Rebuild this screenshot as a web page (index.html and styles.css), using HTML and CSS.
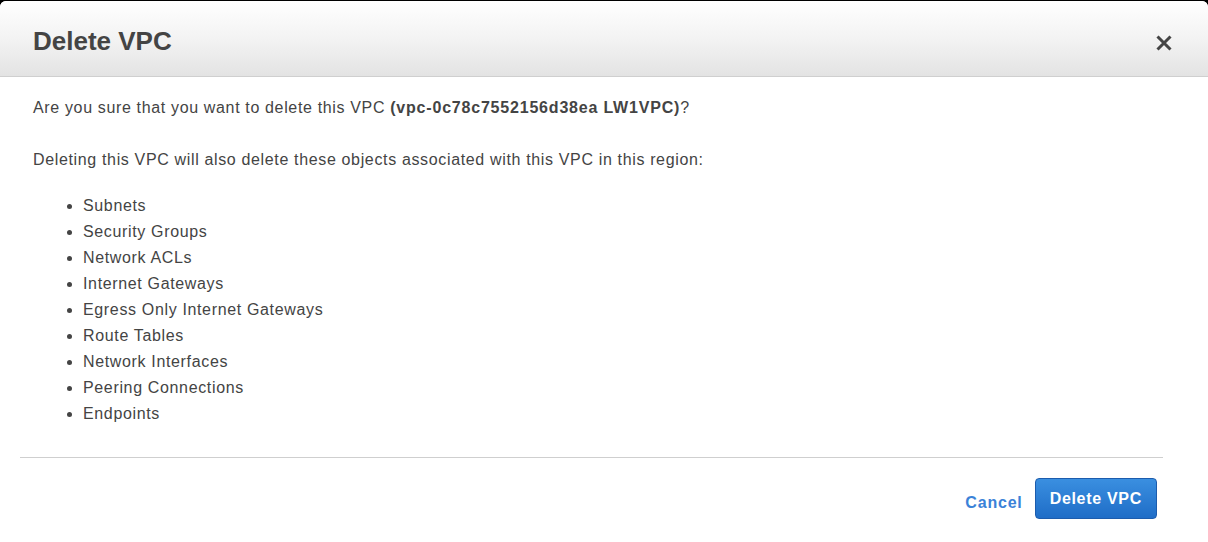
FILE: index.html
```html
<!DOCTYPE html>
<html>
<head>
<meta charset="utf-8">
<link rel="stylesheet" href="styles.css">
</head>
<body>
<div class="modal">
  <div class="modal-header">
    <h1 class="title">Delete VPC</h1>
    <button class="close" aria-label="Close">
      <svg width="18" height="18" viewBox="0 0 18 18"><path d="M2.5 2.5 L15.5 15.5 M15.5 2.5 L2.5 15.5" stroke="#444" stroke-width="3" stroke-linecap="butt"/></svg>
    </button>
  </div>
  <div class="modal-body">
    <p class="line">Are you sure that you want to delete this VPC <b>(vpc-0c78c7552156d38ea LW1VPC)</b>?</p>
    <p class="line second">Deleting this VPC will also delete these objects associated with this VPC in this region:</p>
    <ul class="objects">
      <li>Subnets</li>
      <li>Security Groups</li>
      <li>Network ACLs</li>
      <li>Internet Gateways</li>
      <li>Egress Only Internet Gateways</li>
      <li>Route Tables</li>
      <li>Network Interfaces</li>
      <li>Peering Connections</li>
      <li>Endpoints</li>
    </ul>
  </div>
  <div class="modal-footer">
    <a class="cancel" href="#">Cancel</a>
    <button class="primary">Delete VPC</button>
  </div>
</div>
</body>
</html>
```
FILE: styles.css
```css
html, body {
  margin: 0;
  padding: 0;
  background: #000;
  height: 100%;
}
body {
  font-family: "Liberation Sans", Arial, sans-serif;
  color: #444;
  padding-top: 1px;
  box-sizing: border-box;
}
.modal {
  background: #fff;
  border-radius: 6px 6px 0 0;
  height: 541px;
  overflow: hidden;
}
.modal-header {
  height: 75px;
  background: linear-gradient(to bottom, #ffffff 0%, #f3f3f3 50%, #e3e3e3 100%);
  border-bottom: 1px solid #cfcfcf;
  display: flex;
  align-items: center;
  justify-content: space-between;
  padding: 0 35px 0 33px;
}
.title {
  margin: 0;
  font-size: 26px;
  font-weight: bold;
  color: #444;
  padding-top: 6px;
}
.close {
  border: 0;
  background: none;
  padding: 0;
  width: 18px;
  height: 18px;
  margin-top: 9px;
  display: flex;
}
.modal-body {
  padding: 20px 33px 0 33px;
  font-size: 16px;
  letter-spacing: 0.65px;
}
.line {
  margin: 0;
  line-height: 22px;
}
.line b {
  letter-spacing: 0.8px;
}
.second {
  margin-top: 30px;
}
.objects {
  margin: 22px 0 0 0;
  padding-left: 50px;
  line-height: 26px;
}
.modal-footer {
  margin: 30px 45px 0 20px;
  border-top: 1px solid #cfcfcf;
  padding-top: 20px;
  display: flex;
  justify-content: flex-end;
  align-items: center;
  gap: 12px;
}
.cancel {
  color: #3b82d8;
  font-weight: bold;
  font-size: 16px;
  letter-spacing: 0.8px;
  text-decoration: none;
  margin-top: 8px;
}
.primary {
  height: 41px;
  padding: 0 14px;
  font-family: "Liberation Sans", Arial, sans-serif;
  font-size: 16px;
  font-weight: bold;
  letter-spacing: 0.7px;
  color: #fff;
  background: linear-gradient(to bottom, #3a8fe0 0%, #1f6dc7 100%);
  border: 1px solid #1c5cad;
  border-radius: 4px;
  margin-right: 6px;
}
```
